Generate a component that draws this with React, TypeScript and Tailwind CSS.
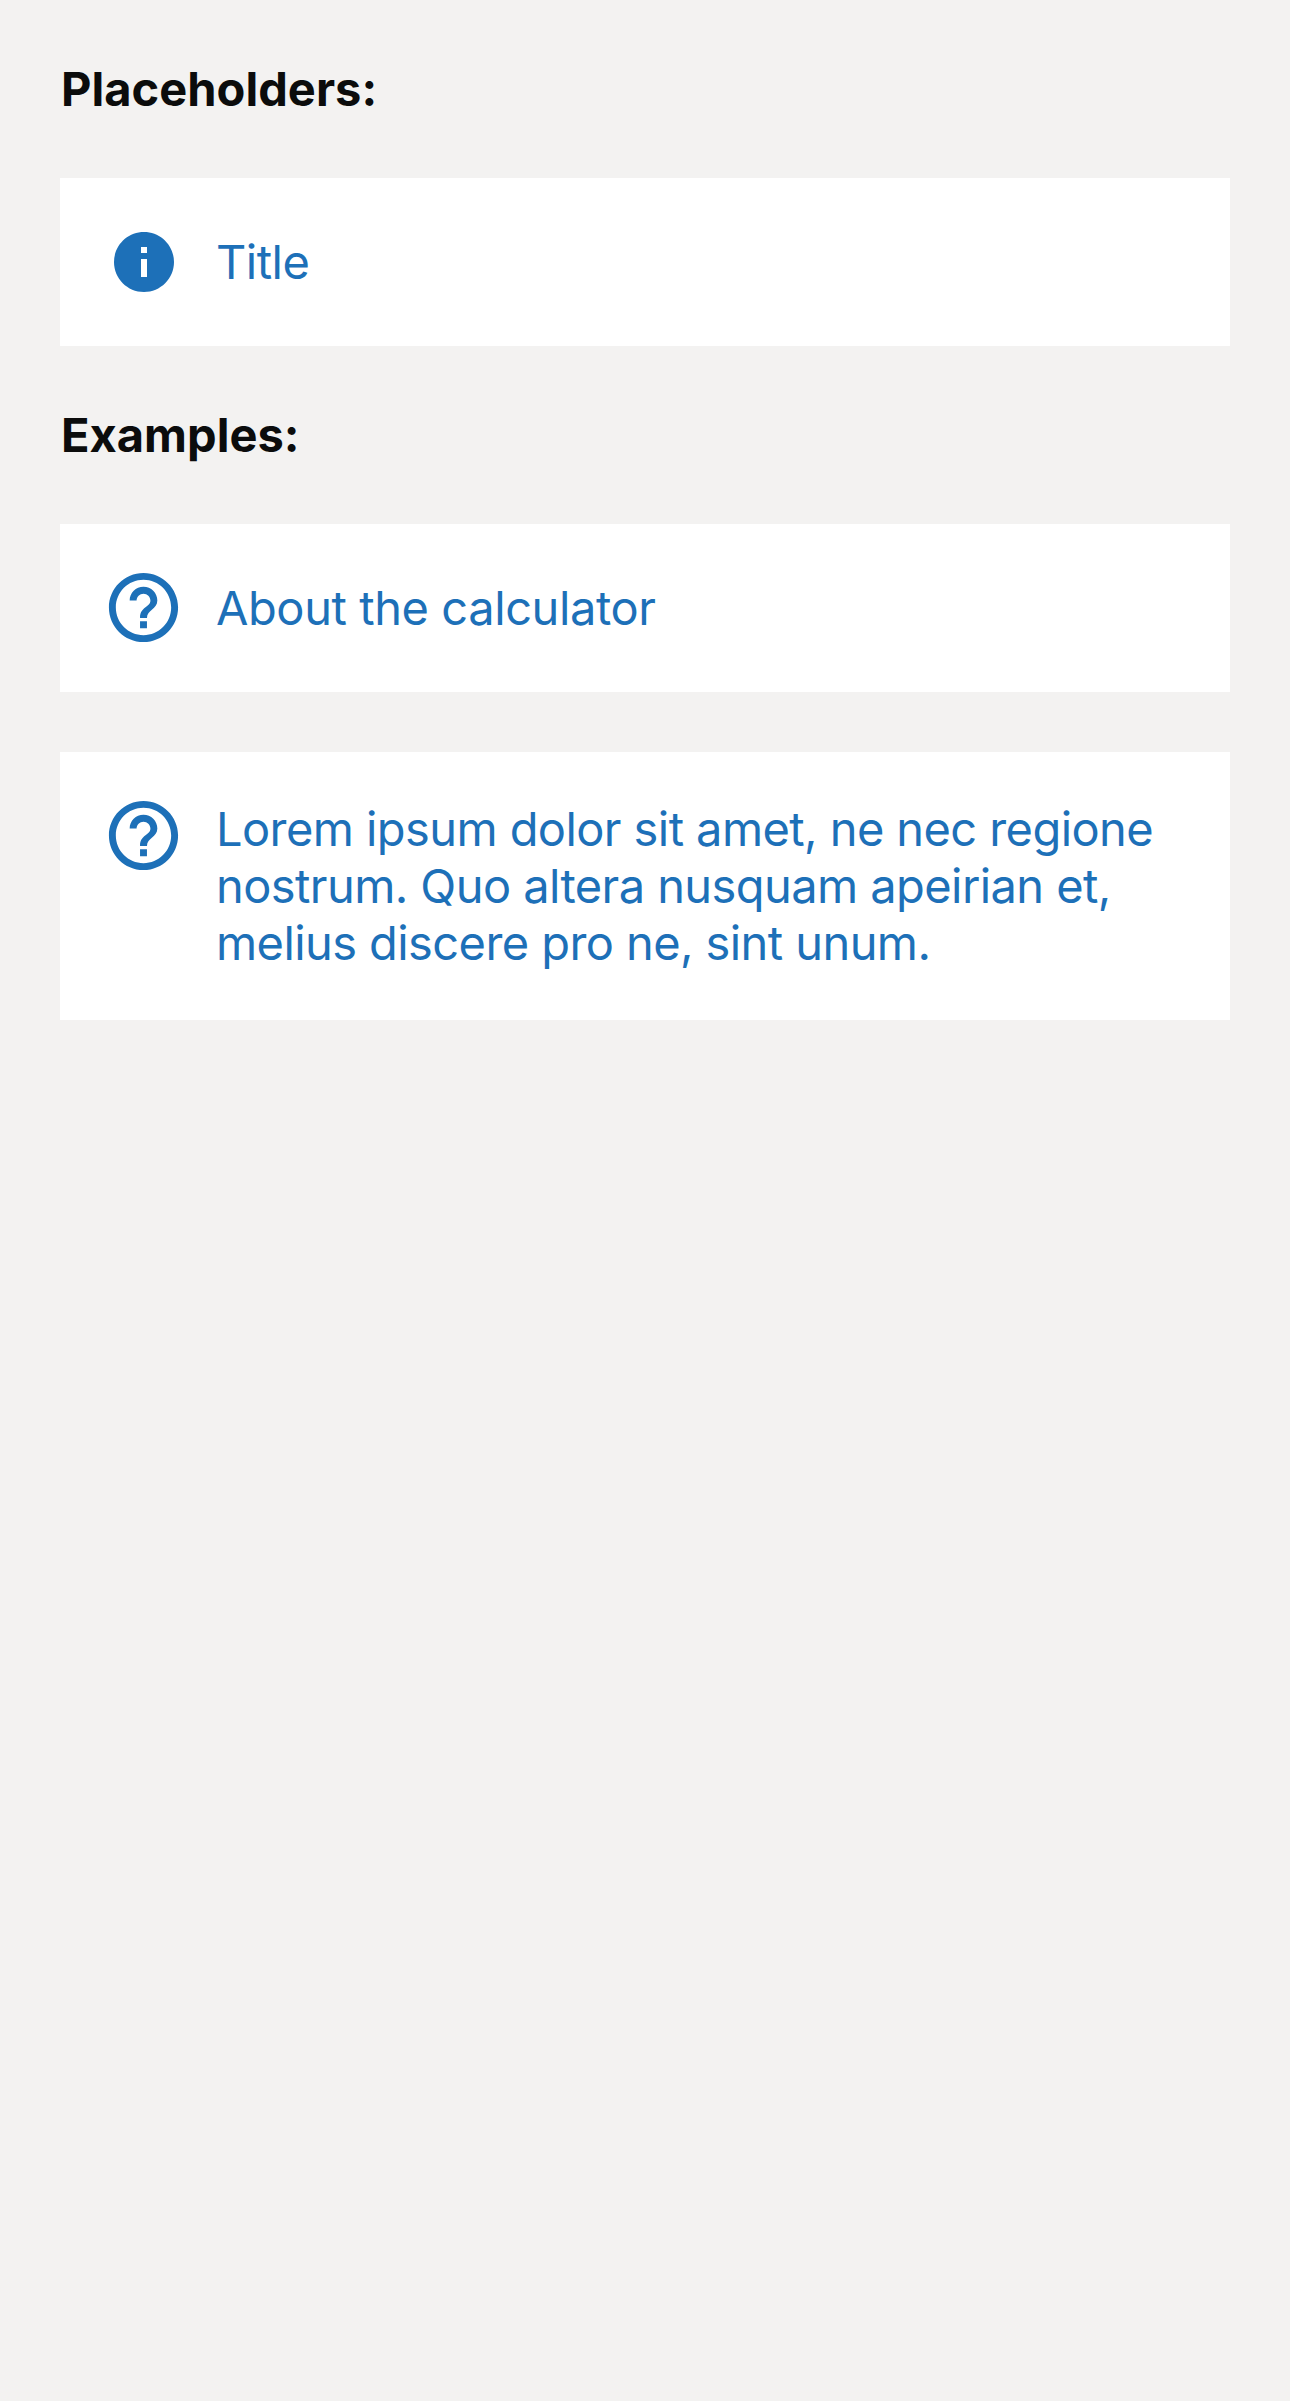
import { MdInfo, MdHelpOutline } from "react-icons/md";

const Heading = ({ children }: { children: string }) => (
  <h2 className="pl-px text-[47px] leading-[57px] font-bold tracking-[0.03px] text-[#0b0c0c]">{children}</h2>
);

export default function App() {
  return (
    <main className="min-h-[2401px] bg-[#f3f2f1] px-[60px] pt-[60px] font-[Inter,sans-serif]">
      <Heading>Placeholders:</Heading>
      <section className="mt-[61px] mb-[60px] flex h-[168px] bg-white pt-12 pl-12 text-[#1d70b8]">
        <MdInfo className="size-[72px] shrink-0" />
        <p className="mt-[7px] ml-9 text-[47px] leading-[57px] tracking-[-0.5px]">Title</p>
      </section>
      <Heading>Examples:</Heading>
      <div className="mt-[61px] flex flex-col gap-[60px]">
        <section className="flex h-[168px] bg-white pt-[42px] pl-[42px] text-[#1d70b8]">
          <MdHelpOutline className="size-[83px] shrink-0" />
          <p className="mt-[13px] ml-[31px] text-[47px] leading-[57px] tracking-[-0.42px]">About the calculator</p>
        </section>
        <section className="flex h-[268px] bg-white pt-[42px] pl-[42px] text-[#1d70b8]">
          <MdHelpOutline className="size-[83px] shrink-0" />
          <p className="mt-[6px] ml-[31px] text-[47px] leading-[57px] tracking-[-0.58px] whitespace-nowrap">
            Lorem ipsum dolor sit amet, ne nec regione
            <br />
            nostrum. Quo altera nusquam apeirian et,
            <br />
            melius discere pro ne, sint unum.
          </p>
        </section>
      </div>
    </main>
  );
}
